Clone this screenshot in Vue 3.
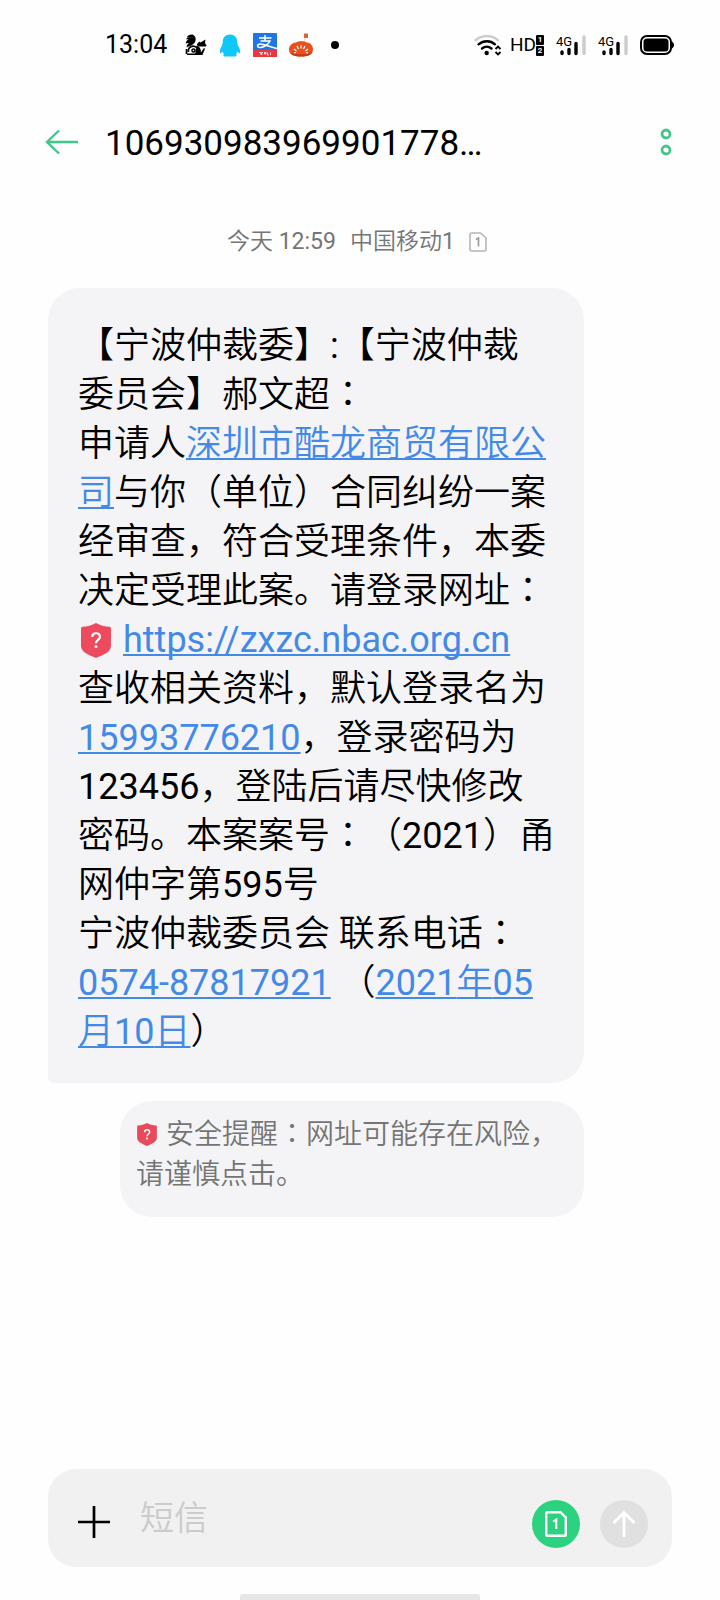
<script setup>
import { ref } from 'vue'

const draft = ref('')
</script>

<template>
  <div class="screen">
    <div class="status">
      <div class="status-left">
        <time class="clock">13:04</time>
        <svg class="ico-sq" viewBox="0 0 22 22" aria-hidden="true">
          <path d="M9 3.200C7 1.500 2.500 2 1 5.500C2 5 3 5.200 3.500 5.500C1.500 6.500 .8 8 .8 9.500C2 8.800 3 8.800 3.800 9C2 10.500 1.500 12 1.800 13.500C2.500 12.500 4 12.300 5 12C7 11.200 9.500 9.500 10.300 7.500C11.200 5 10.500 2 8 .8C5.500 0 3 1.500 2 3Z" />
          <path d="M12 10L14.500 7.500L15.500 8.500L20.500 5.500L20 9L21.500 11.500C21 13 18.500 12.500 17 12.500L12.500 12.500Z" />
          <path d="M11.500 11.500C14.500 12.500 16.500 15.500 15.800 18.500L19 14L20 14.800L18 19.500L17.500 21H10Z" />
          <g fill="none" stroke="#000" stroke-width="1.600">
            <circle cx="8.500" cy="16.500" r="1.500" />
            <path d="M2 20.200H16M3.500 18C2.500 13 8 10.500 11.500 13.500C13.500 15.500 13 18 12 20M1.500 15V20" />
          </g>
        </svg>
        <svg class="ico-qq" viewBox="0 0 22 23" aria-hidden="true">
          <path d="M11 .5C6.500 .5 3.800 3.500 3.800 7.500C3.800 9 3.600 10 2.800 12C1.200 14.500 .5 17 1 19C1.700 19.500 2.700 18.500 3.500 17.500C3.800 18.800 4.500 19.600 5.200 20.200C4 20.800 3.800 22.500 6 22.500H16C18.200 22.500 18 20.800 16.800 20.200C17.500 19.600 18.200 18.800 18.500 17.500C19.300 18.500 20.300 19.500 21 19C21.500 17 20.800 14.500 19.200 12C18.400 10 18.200 9 18.200 7.500C18.200 3.500 15.500 .5 11 .5Z" fill="#10c8f8" />
        </svg>
        <svg class="ico-pay" viewBox="0 0 24 24" aria-hidden="true">
          <rect width="24" height="24" rx="1" fill="#1f74e6" />
          <path d="M0 17H24V23Q24 24 23 24H1Q0 24 0 23Z" fill="#e8383d" />
          <path d="M6 5H18.500M12 2V8M7.500 8H17C15 12 10 14.500 7 14.500C3.500 14.500 4 11 7.500 11C11 11 15 13.500 24 15.500" fill="none" stroke="#fff" stroke-width="1.500" />
          <path d="M6 19.500H8V22M10 19.500H8.800V22M11.500 19.500H13V21H11.500ZM14.500 19.500V22H16M17.500 19.500V22" fill="none" stroke="#fff" stroke-width=".8" />
        </svg>
        <svg class="ico-pump" viewBox="0 0 24 24" aria-hidden="true">
          <path d="M15 .5H19V5H15Z" fill="#d9643c" />
          <path d="M16.500 5L14.500 10" stroke="#f4dccf" stroke-width="1.500" />
          <path d="M7 9.500C10 7.700 15 7.700 18 9.500C22 10 24 13 24 16.500C24 21 20.500 23.500 12 23.500C3.500 23.500 0 21 0 16.500C0 13 2.500 10 7 9.500Z" fill="#e8501e" />
          <path d="M1 19C6 22 18 22 23 19C21.500 22.500 18 23.500 12 23.500C6 23.500 3 22.500 1 19Z" fill="#c93a16" />
          <path d="M12 12V15.500M8 13L9.500 16M16 13L14.500 16M5 16L7.500 18M19 16L16.500 18M5 20L7 19.500M19 20L17 19.500" fill="none" stroke="#fff" stroke-width="1.200" />
        </svg>
        <span class="dot"></span>
      </div>
      <div class="status-right">
        <svg class="ico-wifi" viewBox="0 0 28 21" aria-hidden="true">
          <g fill="none" stroke="#000" stroke-width="2.300" stroke-linecap="round">
            <path d="M1.500 5.200C8 -.3 18 -.3 24 5.200" stroke="#ccc" />
            <path d="M4.500 9.300C9.500 5.200 16.500 5.200 21 9.300" />
            <path d="M8 13.500C11 11.200 14.500 11.200 17.500 13.500" />
          </g>
          <circle cx="12.700" cy="18" r="2.200" />
          <path d="M21.500 14L24 11.500L26.500 14M21.500 17L24 19.500L26.500 17" fill="none" stroke="#000" stroke-width="1.800" />
        </svg>
        <div class="hd">
          <span>HD</span>
          <div class="hd-nums"><b>1</b><b>2</b></div>
        </div>
        <svg v-for="n in 2" :key="n" class="ico-sig" viewBox="0 0 30 21" aria-hidden="true">
          <text x="0" y="11" font-size="13" font-weight="400">4G</text>
          <g stroke-width="3.400" stroke-linecap="round" stroke="#000">
            <path d="M6 17V18.500M13 14.500V18.500M20 8.500V18.500" />
            <path d="M28 2V18.500" stroke="#ccc" />
          </g>
        </svg>
        <svg class="ico-bat" viewBox="0 0 34 20" aria-hidden="true">
          <rect x="1" y="1" width="30" height="18" rx="6" fill="none" stroke="#000" stroke-width="2" />
          <rect x="3.500" y="3.500" width="25" height="13" rx="3.500" />
          <path d="M31 6C35 7.500 35 12.500 31 14Z" />
        </svg>
      </div>
    </div>

    <header class="header">
      <button class="icon-btn back" aria-label="返回">
        <svg viewBox="0 0 34 26"><path d="M14 1.500L2 13L14 24.500M2 13H33" fill="none" stroke="#3fc78a" stroke-width="2.400" /></svg>
      </button>
      <h1 class="title">106930983969901778…</h1>
      <button class="icon-btn more" aria-label="更多">
        <svg viewBox="0 0 12 28"><g fill="none" stroke="#45c48b" stroke-width="2.800"><circle cx="6" cy="6" r="4" /><circle cx="6" cy="22" r="4" /></g></svg>
      </button>
    </header>

    <main class="thread">
      <p class="stamp">
        <span>今天 <span class="num">12:59</span></span>
        <span>中国移动<span class="num">1</span></span>
        <svg class="sim" viewBox="0 0 18 20" aria-hidden="true">
          <path d="M3 1H11.500L17 6V17Q17 19 15 19H3Q1 19 1 17V3Q1 1 3 1Z" fill="none" stroke="#b5b5b5" stroke-width="1.600" />
          <path d="M7 7.500L9.500 6V14.500" fill="none" stroke="#999" stroke-width="1.600" />
        </svg>
      </p>

      <article class="bubble">
        【宁波仲裁委】<span class="num">:</span>【宁波仲裁<br>委员会】郝文超<span class="mid">：</span><br>申请人<a href="#company">深圳市酷龙商贸有限公<br>司</a>与你（单位）合同纠纷一案<br>经审查，符合受理条件，本委<br>决定受理此案。请登录网址<span class="mid">：</span><br><svg class="shield" viewBox="0 0 30 35" aria-hidden="true"><path d="M15 0C19 2.500 24 3.500 28.500 3.800Q30 4 30 5.500V23C30 29 22 32 15 35C8 32 0 29 0 23V5.500Q0 4 1.500 3.800C6 3.500 11 2.500 15 0Z" fill="#ee4a5d" /><path d="M11.300 14C11.300 9 19 9 19 14C19 16.500 15 17 15 20.300" fill="none" stroke="#fff" stroke-width="2.200" /><circle cx="15" cy="23.500" r="1.500" fill="#fff" /></svg><a href="#site" class="num">https://zxzc.nbac.org.cn</a><br>查收相关资料，默认登录名为<br><a href="#phone" class="num">15993776210</a>，登录密码为<br><span class="num">123456</span>，登陆后请尽快修改<br>密码。本案案号<span class="mid">：</span>（<span class="num">2021</span>）甬<br>网仲字第<span class="num">595</span>号<br>宁波仲裁委员会 联系电话<span class="mid">：</span><br><a href="#tel" class="num">0574-87817921</a> （<a href="#date"><span class="num">2021</span>年<span class="num">05</span><br>月<span class="num">10</span>日</a>）
      </article>

      <aside class="notice">
        <svg class="shield-sm" viewBox="0 0 30 35" aria-hidden="true"><path d="M15 0C19 2.500 24 3.500 28.500 3.800Q30 4 30 5.500V23C30 29 22 32 15 35C8 32 0 29 0 23V5.500Q0 4 1.500 3.800C6 3.500 11 2.500 15 0Z" fill="#e84a5b" /><path d="M11.300 14C11.300 9 19 9 19 14C19 16.500 15 17 15 20.300" fill="none" stroke="#fff" stroke-width="2.200" /><circle cx="15" cy="23.500" r="1.500" fill="#fff" /></svg>安全提醒<span class="mid">：</span>网址可能存在风险，<br>请谨慎点击。
      </aside>
    </main>

    <form class="composer" @submit.prevent>
      <button type="button" class="icon-btn plus" aria-label="添加">
        <svg viewBox="0 0 32 32"><path d="M0 16H32M16 0V32" stroke="#000" stroke-width="2.700" /></svg>
      </button>
      <input v-model="draft" class="field" type="text" placeholder="短信" aria-label="短信">
      <button type="button" class="round sim-btn" aria-label="卡1">
        <svg viewBox="0 0 48 48"><path d="M15.500 12.200H28.500L33.800 17.500V34.500Q33.800 35.800 32.500 35.800H15.500Q14.200 35.800 14.200 34.500V13.500Q14.200 12.200 15.500 12.200Z" fill="none" stroke="#fff" stroke-width="2.400" /><path d="M21 21.500L24.300 19.500V29" fill="none" stroke="#fff" stroke-width="2" /></svg>
      </button>
      <button type="submit" class="round send-btn" aria-label="发送">
        <svg viewBox="0 0 48 48"><path d="M13.500 23L24 12.500L34.500 23M24 13V37" fill="none" stroke="#fff" stroke-width="2.800" /></svg>
      </button>
    </form>
    <div class="home"></div>
  </div>
</template>

<style>
body {
  background: #fefefe;
}
</style>

<style scoped>
.screen {
  display: flex;
  flex-direction: column;
  min-height: 100vh;
  box-sizing: border-box;
  background: #fefefe;
  color: #000;
  font-family: Roboto, "Noto Sans CJK SC", sans-serif;
  font-weight: 350;
  text-spacing-trim: space-all;
}
svg {
  display: block;
  flex: none;
}
.num {
  font-weight: 400;
}
.status {
  display: flex;
  align-items: center;
  justify-content: space-between;
  height: 90px;
  padding: 0 46px 0 105px;
  font-weight: 400;
}
.status-left,
.status-right {
  display: flex;
  align-items: center;
}
.status-left {
  gap: 12px;
}
.status-right {
  gap: 8px;
}
.clock {
  font-size: 25px;
  line-height: 30px;
  margin-right: 6px;
}
.ico-sq { width: 22px; height: 22px; }
.ico-qq { width: 22px; height: 23px; }
.ico-pay { width: 24px; height: 24px; }
.ico-pump { width: 24px; height: 24px; }
.dot {
  width: 8px;
  height: 8px;
  margin-left: 6px;
  border-radius: 50%;
  background: #000;
}
.ico-wifi { width: 28px; height: 21px; }
.ico-sig { width: 30px; height: 21px; }
.ico-bat { width: 34px; height: 20px; }
.ico-sig,
.ico-bat {
  margin-left: 4px;
}
.hd {
  display: flex;
  align-items: center;
  font-size: 19px;
  line-height: 20px;
}
.hd-nums {
  display: flex;
  flex-direction: column;
  gap: 1px;
}
.hd-nums b {
  width: 8px;
  border-radius: 1px;
  background: #000;
  color: #fff;
  font-size: 8px;
  line-height: 10px;
  text-align: center;
}
.header {
  display: flex;
  align-items: center;
  height: 104px;
  padding: 0 48px 0 45px;
}
.icon-btn {
  padding: 0;
  border: 0;
  background: none;
}
.back svg { width: 34px; height: 26px; }
.more svg { width: 12px; height: 28px; }
.title {
  flex: 1;
  margin: 0;
  padding: 4px 0 0 26px;
  font-size: 35px;
  line-height: 48px;
  font-weight: 400;
}
.thread {
  flex: 1;
  padding: 34px 48px 0;
}
.stamp {
  display: flex;
  align-items: center;
  justify-content: center;
  gap: 14px;
  height: 28px;
  margin: 0 0 32px;
  padding-right: 6px;
  color: #757575;
  font-size: 23px;
  line-height: 28px;
}
.sim { width: 18px; height: 20px; }
.bubble {
  width: calc(100% - 88px);
  box-sizing: border-box;
  padding: 34px 24px 26px 30px;
  border-radius: 32px 32px 32px 6px;
  background: #f4f4f7;
  font-size: 36px;
  line-height: 49px;
}
.bubble a {
  color: #4389e8;
  text-decoration-line: underline;
  text-decoration-thickness: 2px;
  text-underline-offset: 2px;
  text-decoration-skip-ink: none;
}
.mid {
  font-family: "Noto Sans CJK TC", sans-serif;
  line-height: 1;
}
.shield {
  display: inline-block;
  width: 30px;
  height: 35px;
  margin: 0 12px 0 3px;
  vertical-align: -6px;
}
.notice {
  width: calc(100% - 160px);
  box-sizing: border-box;
  margin: 18px 0 0 72px;
  padding: 14px 16px 22px;
  border-radius: 32px;
  background: #f4f4f7;
  color: #757575;
  font-size: 28px;
  line-height: 40px;
}
.shield-sm {
  display: inline-block;
  width: 20px;
  height: 23px;
  margin: 0 9px 0 1px;
  vertical-align: -2px;
}
.composer {
  display: flex;
  align-items: center;
  height: 98px;
  margin: 0 48px 27px;
  padding: 0 24px 0 30px;
  border-radius: 28px;
  background: #f1f1f1;
}
.plus svg { width: 32px; height: 32px; }
.plus {
  padding-top: 8px;
}
.field {
  flex: 1;
  min-width: 0;
  margin-left: 30px;
  padding: 0;
  border: 0;
  outline: 0;
  background: none;
  color: #000;
  font: 350 34px/48px Roboto, "Noto Sans CJK SC", sans-serif;
}
.field::placeholder {
  color: #cbcbcb;
  opacity: 1;
}
.round {
  width: 48px;
  height: 48px;
  margin-top: 12px;
  padding: 0;
  border: 0;
  border-radius: 50%;
}
.sim-btn { background: #2dd280; }
.send-btn {
  margin-left: 20px;
  background: #e0e0e0;
}
.home {
  width: 240px;
  height: 6px;
  margin: 0 auto;
  border-radius: 3px 3px 0 0;
  background: #e6e6e6;
}
</style>
